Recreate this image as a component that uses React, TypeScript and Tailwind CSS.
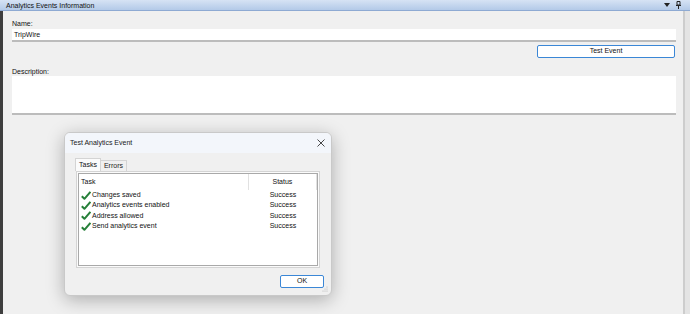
import React from "react";

const tasks = [
  "Changes saved",
  "Analytics events enabled",
  "Address allowed",
  "Send analytics event",
];

const Check = () => (
  <svg width="10" height="9" viewBox="0 0 10 9" className="shrink-0">
    <path d="M0.8 5.2 L3.4 7.8 L9.4 0.8" fill="none" stroke="#27803a" strokeWidth="2" strokeLinejoin="round" />
  </svg>
);

const TestEventDialog = () => (
  <div className="absolute left-[64px] top-[132px] w-[268px] h-[164px] rounded-[6px] border border-[#c9c9c9] bg-[#f0f0f0] shadow-[0_4px_18px_rgba(0,0,0,0.28)] flex flex-col overflow-hidden">
    {/* title bar */}
    <div className="h-[20px] bg-[#f3f6fb] flex items-center justify-between pl-[5px] pr-[6px]">
      <span className="text-[7px] text-[#1a1a1a]">Test Analytics Event</span>
      <svg width="8" height="8" viewBox="0 0 8 8">
        <path d="M0.5 0.5 L7.5 7.5 M7.5 0.5 L0.5 7.5" stroke="#333" strokeWidth="0.9" />
      </svg>
    </div>

    {/* tabs */}
    <div className="flex items-end h-[18px] pl-[10px]">
      <div className="h-[13px] px-[3px] bg-[#fbfbfb] border border-b-0 border-[#d4d4d4] flex items-center text-[7px]">
        Tasks
      </div>
      <div className="h-[11px] px-[3px] border-t border-r border-[#d4d4d4] flex items-center text-[7px] text-[#222]">
        Errors
      </div>
    </div>

    {/* tab page with list view */}
    <div className="mx-[11px] h-[97px] border border-[#d4d4d4] bg-[#fbfbfb] p-[1px]">
      <div className="h-full border border-[#a9a9a9] bg-white flex flex-col">
        <div className="flex h-[16px] items-center text-[7px]">
          <div className="w-[172px] pl-[2px] h-full flex items-center border-r border-[#e1e1e1]">Task</div>
          <div className="w-[69px] h-full flex items-center justify-center border-r border-[#e1e1e1]">Status</div>
        </div>
        {tasks.map((task) => (
          <div key={task} className="flex h-[10.3px] items-center text-[7px]">
            <div className="w-[172px] pl-[2px] flex items-center gap-[1px]">
              <Check />
              <span>{task}</span>
            </div>
            <div className="w-[69px] text-center">Success</div>
          </div>
        ))}
      </div>
    </div>

    {/* OK */}
    <div className="flex justify-end pr-[7px] mt-[7px]">
      <button className="w-[44px] h-[13px] rounded-[2px] border border-[#3b87d6] bg-white text-[7px] flex items-center justify-center">
        OK
      </button>
    </div>
    <svg width="6" height="6" viewBox="0 0 6 6" className="absolute right-[3px] bottom-[3px]">
      <circle cx="5" cy="1" r="0.5" fill="#aaa" />
      <circle cx="3" cy="3" r="0.5" fill="#aaa" />
      <circle cx="5" cy="3" r="0.5" fill="#aaa" />
      <circle cx="1" cy="5" r="0.5" fill="#aaa" />
      <circle cx="3" cy="5" r="0.5" fill="#aaa" />
      <circle cx="5" cy="5" r="0.5" fill="#aaa" />
    </svg>
  </div>
);

export default function App() {
  return (
    <div className="relative w-[690px] h-[314px] overflow-hidden bg-[#f0f0f0] text-[#111] font-['Liberation_Sans',Arial,sans-serif] flex flex-col">
      {/* panel header */}
      <div className="h-[11px] shrink-0 bg-gradient-to-b from-[#d6e3f4] to-[#b3cae8] border-b border-[#8eaad3] flex items-center justify-between pl-[6px] pr-[9px]">
        <span className="text-[7px] leading-none">Analytics Events Information</span>
        <div className="flex items-center gap-[6px]">
          <svg width="6" height="4" viewBox="0 0 6 4">
            <path d="M0 0 H6 L3 4 Z" fill="#222" />
          </svg>
          <svg width="5" height="8" viewBox="0 0 5 8">
            <path d="M1 0.5 H4 V4 H1 Z M0 4.5 H5 M2.5 4.5 V8" stroke="#222" strokeWidth="1" fill="none" />
          </svg>
        </div>
      </div>

      <div className="flex flex-1">
        <div className="w-[3px] bg-[#3e3e3e]" />
        <div className="flex-1 pl-[9px] pr-[7px] flex flex-col text-[7px]">
          <div className="mt-[7px] h-[10px] flex items-end leading-none pb-[1px]">Name:</div>
          <div className="mt-[1px] h-[13px] bg-white border-b-2 border-[#bcbcbc] flex items-center pl-[2px] pt-[1px]">TripWire</div>
          <div className="mt-[3px] flex justify-end pr-[1px]">
            <button className="w-[138px] h-[13px] rounded-[2px] border border-[#3b87d6] bg-white flex items-center justify-center text-[7px]">
              Test Event
            </button>
          </div>
          <div className="mt-[8px] h-[10px] flex items-end leading-none pb-[1px]">Description:</div>
          <div className="mt-[0px] h-[39px] bg-white border-b-2 border-[#bcbcbc]" />
        </div>
        <div className="w-[2px] bg-[#cdcdcd]" />
        <div className="w-[5px] bg-[#e4e4e4]" />
      </div>

      <TestEventDialog />
    </div>
  );
}
